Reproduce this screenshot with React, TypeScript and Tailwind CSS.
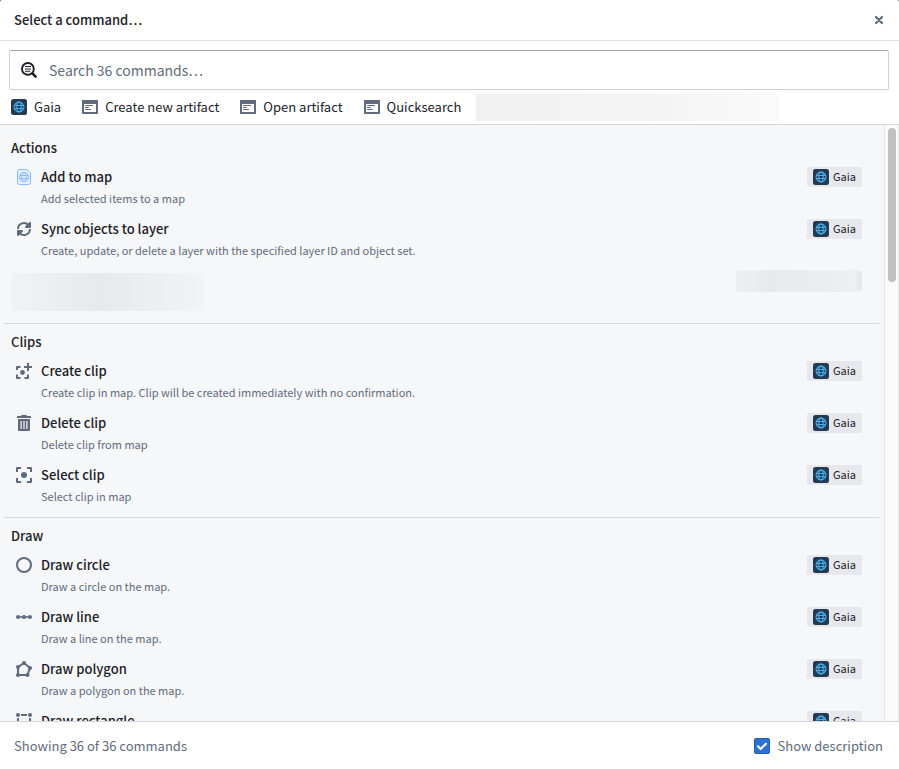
import { useState, type ReactNode } from "react";

function Svg({ children, className = "text-[#5f6b7c]" }: { children: ReactNode; className?: string }) {
  return (
    <svg viewBox="0 0 16 16" fill="currentColor" aria-hidden="true" className={`size-4 shrink-0 ${className}`}>
      {children}
    </svg>
  );
}

function GaiaIcon() {
  return (
    <svg viewBox="0 0 16 16" aria-hidden="true" className="size-4 shrink-0">
      <rect width="16" height="16" rx="2.5" fill="#233a50" />
      <g fill="none" stroke="#48aff0" strokeWidth="1.1">
        <circle cx="8" cy="8" r="4.9" />
        <ellipse cx="8" cy="8" rx="2.2" ry="4.9" />
        <path d="M3.6 6.5h8.8M3.6 9.5h8.8" />
      </g>
    </svg>
  );
}

function ApplicationIcon() {
  return (
    <Svg>
      <path
        fillRule="evenodd"
        d="M1 1h14c.6 0 1 .4 1 1v12c0 .6-.4 1-1 1H1c-.6 0-1-.4-1-1V2c0-.6.4-1 1-1Zm1 4v8h12V5H2Z"
      />
      <path d="M3.500 6h7a.5.5 0 0 1 0 1h-7a.5.5 0 0 1 0-1Zm0 2h3a.5.5 0 0 1 0 1h-3a.5.5 0 0 1 0-1Zm0 2h5a.5.5 0 0 1 0 1h-5a.5.5 0 0 1 0-1Z" />
    </Svg>
  );
}

function SearchTextIcon() {
  return (
    <Svg className="text-[#1c2127]">
      <circle cx="6.9" cy="6.9" r="5.9" fill="none" stroke="currentColor" strokeWidth="1.9" />
      <path d="M11.4 11.4l3.2 3.2" stroke="currentColor" strokeWidth="2.6" strokeLinecap="round" />
      <path d="M4 4h6v1H4zM4 6.400h6v1H4zM4 8.800h5v1H4z" />
    </Svg>
  );
}

function MapFileIcon() {
  return (
    <Svg className="text-[#8abbff]">
      <path
        d="M3.500 .5h7.300L14.500 4v9.500a2 2 0 0 1-2 2h-9a2 2 0 0 1-2-2v-11a2 2 0 0 1 2-2Z"
        fill="#e3eefd"
        stroke="currentColor"
      />
      <g fill="none" stroke="currentColor">
        <circle cx="8" cy="8" r="4.500" />
        <ellipse cx="8" cy="8" rx="2.100" ry="4.500" />
        <path d="M3.800 6.500h8.400M3.800 9.500h8.400" />
      </g>
    </Svg>
  );
}

function RefreshIcon() {
  return (
    <Svg>
      <path d="M2 8a6 6 0 0 1 10.600-3.800M14 8a6 6 0 0 1-10.600 3.800" fill="none" stroke="currentColor" strokeWidth="2" />
      <path d="M15 2v4c0 .6-.4 1-1 1h-4c-1 0-1.300-1-.7-1.700L13.300 1.300C14 .7 15 1 15 2ZM1 14v-4c0-.6.4-1 1-1h4c1 0 1.300 1 .7 1.700l-4 4C2 15.300 1 15 1 14Z" />
    </Svg>
  );
}

function CreateClipIcon() {
  return (
    <Svg>
      <path
        d="M1 7V4h3.500M1 11.500V15h3.500M8.500 15H12v-3.500"
        fill="none"
        stroke="currentColor"
        strokeWidth="2"
        strokeLinejoin="round"
      />
      <circle cx="6.500" cy="9.500" r="2.400" />
      <path d="M11 0h2v3h3v2h-3v3h-2V5H8V3h3Z" />
    </Svg>
  );
}

function TrashIcon() {
  return (
    <Svg>
      <path d="M14.500 1H11c0-.6-.4-1-1-1H6c-.6 0-1 .4-1 1H1.500C1 1 1 2 1 3h14c0-1 0-2-.5-2Z" />
      <path
        fillRule="evenodd"
        d="M2 4h12v11c0 .6-.4 1-1 1H3c-.6 0-1-.4-1-1V4Zm2.500 2v8h1.200V6Zm2.900 0v8h1.200V6Zm2.900 0v8h1.200V6Z"
      />
    </Svg>
  );
}

function SelectClipIcon() {
  return (
    <Svg>
      <path
        d="M1 5V1h4M11 1h4v4M15 11v4h-4M5 15H1v-4"
        fill="none"
        stroke="currentColor"
        strokeWidth="2"
        strokeLinejoin="round"
      />
      <circle cx="8" cy="8" r="3" />
    </Svg>
  );
}

function CircleIcon() {
  return (
    <Svg>
      <circle cx="8" cy="8" r="7" fill="none" stroke="currentColor" strokeWidth="2" />
    </Svg>
  );
}

function LineIcon() {
  return (
    <Svg>
      <path d="M2 7.200h12v1.600H2z" />
      <circle cx="2" cy="8" r="2" />
      <circle cx="8" cy="8" r="2" />
      <circle cx="14" cy="8" r="2" />
    </Svg>
  );
}

function PolygonIcon() {
  return (
    <Svg>
      <path d="M8 2 14 7l-2.500 7H2V6Z" fill="none" stroke="currentColor" strokeWidth="2" />
      <circle cx="8" cy="2" r="2" />
      <circle cx="14" cy="7" r="2" />
      <circle cx="11.500" cy="14" r="2" />
      <circle cx="2" cy="14" r="2" />
      <circle cx="2" cy="6" r="2" />
    </Svg>
  );
}

function RectangleIcon() {
  return (
    <Svg>
      <circle cx="2" cy="2" r="2" />
      <circle cx="14" cy="2" r="2" />
      <circle cx="2" cy="14" r="2" />
      <circle cx="14" cy="14" r="2" />
      <path d="M5 1h6v2H5zM5 13h6v2H5zM1 5h2v6H1zM13 5h2v6h-2z" />
    </Svg>
  );
}

type Command = { title: string; description: string; Icon: () => ReactNode };
type Group = { name: string; commands: Command[]; hiddenEntry?: boolean };

const groups: Group[] = [
  {
    name: "Actions",
    hiddenEntry: true,
    commands: [
      { title: "Add to map", description: "Add selected items to a map", Icon: MapFileIcon },
      {
        title: "Sync objects to layer",
        description: "Create, update, or delete a layer with the specified layer ID and object set.",
        Icon: RefreshIcon,
      },
    ],
  },
  {
    name: "Clips",
    commands: [
      {
        title: "Create clip",
        description: "Create clip in map. Clip will be created immediately with no confirmation.",
        Icon: CreateClipIcon,
      },
      { title: "Delete clip", description: "Delete clip from map", Icon: TrashIcon },
      { title: "Select clip", description: "Select clip in map", Icon: SelectClipIcon },
    ],
  },
  {
    name: "Draw",
    commands: [
      { title: "Draw circle", description: "Draw a circle on the map.", Icon: CircleIcon },
      { title: "Draw line", description: "Draw a line on the map.", Icon: LineIcon },
      { title: "Draw polygon", description: "Draw a polygon on the map.", Icon: PolygonIcon },
      { title: "Draw rectangle", description: "", Icon: RectangleIcon },
    ],
  },
];

function CommandRow({ command, showDescription }: { command: Command; showDescription: boolean }) {
  const { Icon, title, description } = command;
  return (
    <li>
      <button type="button" className="flex w-full items-start pt-[7px] pr-[17px] pb-[5px] pl-[11px] text-left">
        <span className="flex h-5 w-[25px] shrink-0 items-center">
          <Icon />
        </span>
        <span className="min-w-0 flex-1">
          <span className="block leading-5 font-medium">{title}</span>
          {showDescription && (
            <span className="mt-0.5 block text-[11px] leading-[18px] text-[#5f6b7c]">{description}</span>
          )}
        </span>
        <span className="flex h-5 items-center gap-1 rounded-xs bg-[#e6e8ee] px-1.5 text-[11px]">
          <GaiaIcon />
          <span className="h-5 leading-[18px]">Gaia</span>
        </span>
      </button>
    </li>
  );
}

function HiddenRow() {
  return (
    <li className="flex h-[52px] items-start justify-between pt-1.5 pr-[17px] pl-1.5">
      <div className="mt-[3px] h-[38px] w-[193px] bg-linear-to-r from-[#f1f2f4] via-[#e8e9eb] via-45% to-[#f2f3f5]" />
      <div className="flex items-center">
        <div className="h-[22px] w-[121px] bg-linear-to-r from-[#eeeff1] via-[#e8e9ec] via-30% to-[#eeeff1]" />
        <div className="h-5 w-[5px] rounded-r-xs bg-[#e6e8ee]" />
      </div>
    </li>
  );
}

const shortcuts = [
  { label: "Gaia", Icon: GaiaIcon },
  { label: "Create new artifact", Icon: ApplicationIcon },
  { label: "Open artifact", Icon: ApplicationIcon },
  { label: "Quicksearch", Icon: ApplicationIcon },
];

export default function App() {
  const [showDescription, setShowDescription] = useState(true);

  return (
    <div className="h-screen bg-[#5c5f63]">
      <div
        role="dialog"
        aria-label="Select a command"
        className="flex h-full flex-col overflow-hidden rounded-t-xs bg-white font-['Noto_Sans_CJK_JP','Noto_Sans_CJK_SC',sans-serif] text-[13px] leading-5 text-[#1c2127]"
      >
        <header className="flex h-[41px] shrink-0 items-center justify-between border-b border-[#dcdddf] px-3.5">
          <h1 className="font-medium">Select a command…</h1>
          <button type="button" aria-label="Close" className="flex size-3 items-center justify-center">
            <svg viewBox="0 0 12 12" aria-hidden="true" className="size-3 text-[#5f6b7c]">
              <path d="M3 3l6 6M9 3l-6 6" stroke="currentColor" strokeWidth="2.200" strokeLinecap="round" />
            </svg>
          </button>
        </header>

        <div className="shrink-0 border-b border-[#d3d5d8] px-[9px] pt-[9px]">
          <label className="mr-px flex h-10 items-center gap-3 rounded-xs border border-[#cfd0d2] border-t-[#a5a7aa] pl-[11px]">
            <SearchTextIcon />
            <input
              type="text"
              aria-label="Search commands"
              placeholder="Search 36 commands…"
              className="h-full min-w-0 flex-1 bg-transparent text-[14px] outline-none placeholder:text-[#5f6b7c]"
            />
          </label>
          <nav className="flex h-[34px] items-center pl-0.5">
            <ul className="flex gap-[21px]">
              {shortcuts.map(({ label, Icon }) => (
                <li key={label}>
                  <button type="button" className="flex items-center gap-[7px]">
                    <Icon />
                    {label}
                  </button>
                </li>
              ))}
            </ul>
            <div className="ml-[15px] h-[27px] w-[303px] bg-linear-to-r from-[#f1f1f1] via-[#f4f4f5] via-60% to-[#fafafa]" />
          </nav>
        </div>

        <div className="flex min-h-0 flex-1 bg-[#f6f7f9]">
          <main className="min-w-0 flex-1 overflow-y-auto px-[5px] pt-[5px] [scrollbar-width:none]">
            {groups.map((group) => (
              <section key={group.name} className="-ml-px border-b border-[#d6d8dc] pb-[7px] pl-px last:border-0">
                <h2 className="pt-2 pb-0.5 pl-1.5 font-medium">{group.name}</h2>
                <ul>
                  {group.commands.map((command) => (
                    <CommandRow key={command.title} command={command} showDescription={showDescription} />
                  ))}
                  {group.hiddenEntry && <HiddenRow />}
                </ul>
              </section>
            ))}
          </main>
          <div aria-hidden="true" className="w-[15px] shrink-0 border-x border-[#e6e6e6] bg-[#fafafa] px-[3px] pt-[3px]">
            <div className="h-[154px] w-2 rounded-full bg-[#c1c1c1]" />
          </div>
        </div>

        <footer className="flex h-12 shrink-0 items-center justify-between border-t border-[#d3d5d8] pr-4 pl-3.5 text-[#5f6b7c]">
          <p>Showing 36 of 36 commands</p>
          <label className="flex items-center gap-2">
            <span className="grid size-4">
              <input
                type="checkbox"
                checked={showDescription}
                onChange={(e) => setShowDescription(e.target.checked)}
                className="peer col-start-1 row-start-1 size-4 appearance-none rounded-xs border border-[#c5cbd3] checked:border-[#215db0] checked:bg-[#2d72d2]"
              />
              <svg
                viewBox="0 0 16 16"
                aria-hidden="true"
                className="pointer-events-none col-start-1 row-start-1 hidden size-4 text-white peer-checked:block"
              >
                <path d="M4 8.300l2.700 2.700L12 5.700" fill="none" stroke="currentColor" strokeWidth="2" strokeLinecap="round" strokeLinejoin="round" />
              </svg>
            </span>
            Show description
          </label>
        </footer>
      </div>
    </div>
  );
}
